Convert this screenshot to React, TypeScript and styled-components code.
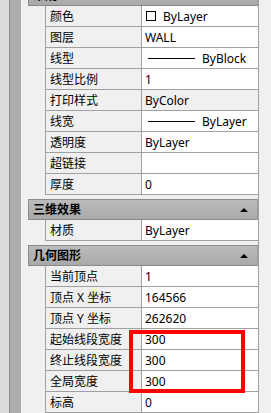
import React from 'react';
import styled, { createGlobalStyle } from 'styled-components';

const GlobalStyle = createGlobalStyle`
  html, body {
    margin: 0;
    padding: 0;
    overflow: hidden;
    background: #f0f0f0;
  }
`;

interface Row {
  label: string;
  value?: string;
  swatch?: boolean;
  lineSample?: boolean;
  readonly?: boolean;
}

interface Section {
  title: string;
  rows: Row[];
}

const sections: Section[] = [
  {
    title: '常规',
    rows: [
      { label: '颜色', value: 'ByLayer', swatch: true },
      { label: '图层', value: 'WALL' },
      { label: '线型', value: 'ByBlock', lineSample: true },
      { label: '线型比例', value: '1' },
      { label: '打印样式', value: 'ByColor', readonly: true },
      { label: '线宽', value: 'ByLayer', lineSample: true },
      { label: '透明度', value: 'ByLayer' },
      { label: '超链接', value: '' },
      { label: '厚度', value: '0' },
    ],
  },
  {
    title: '三维效果',
    rows: [{ label: '材质', value: 'ByLayer' }],
  },
  {
    title: '几何图形',
    rows: [
      { label: '当前顶点', value: '1' },
      { label: '顶点 X 坐标', value: '164566' },
      { label: '顶点 Y 坐标', value: '262620' },
      { label: '起始线段宽度', value: '300' },
      { label: '终止线段宽度', value: '300' },
      { label: '全局宽度', value: '300' },
      { label: '标高', value: '0' },
    ],
  },
];

const App: React.FC = () => {
  return (
    <Window>
      <GlobalStyle />
      <OuterStrip />
      <TitleStrip />
      <Palette>
        {sections.map((section, i) => (
          <Group key={section.title} $first={i === 0}>
            <GroupHeader>
              <span>{section.title}</span>
              <Collapse />
            </GroupHeader>
            {section.rows.map((row) => (
              <PropRow key={row.label}>
                <Label>{row.label}</Label>
                <Value $readonly={row.readonly}>
                  {row.swatch && <Swatch />}
                  {row.lineSample && <LineSample />}
                  {row.value}
                </Value>
              </PropRow>
            ))}
          </Group>
        ))}
      </Palette>
      <ScrollArea />
      {/* red annotation around the width fields */}
      <Highlight />
    </Window>
  );
};

const Window = styled.div`
  position: relative;
  display: flex;
  width: 271px;
  height: 413px;
  overflow: hidden;
  background: #f0f0f0;
  font-family: 'Noto Sans', 'Noto Sans CJK SC', sans-serif;
  font-size: 12px;
  color: #000;
`;

const OuterStrip = styled.div`
  width: 9px;
  flex: none;
  background: #dcdcdc;
  border-right: 1px solid #8c8c8c;
`;

const TitleStrip = styled.div`
  width: 11px;
  flex: none;
  background: #adadad;
`;

const Palette = styled.div`
  width: 237px;
  flex: none;
  padding-left: 7px;
  box-sizing: border-box;
  background: #f0f0f0;
  display: flex;
  flex-direction: column;
`;

const Group = styled.div<{ $first?: boolean }>`
  display: flex;
  flex-direction: column;
  margin-top: ${(p) => (p.$first ? '-15px' : '4px')};
`;

const GroupHeader = styled.div`
  height: 19px;
  display: flex;
  align-items: center;
  justify-content: space-between;
  padding: 0 9px 0 4px;
  border: 1px solid #8a8a8a;
  border-right-color: #9a9a9a;
  background: linear-gradient(#bcbcbc, #a9a9a9);
  font-weight: 700;
  line-height: 19px;
`;

const Collapse = styled.span`
  width: 0;
  height: 0;
  border-left: 4px solid transparent;
  border-right: 4px solid transparent;
  border-bottom: 4px solid #000;
`;

const PropRow = styled.div`
  display: grid;
  grid-template-columns: 96px 1fr;
  margin-left: 17px;
  height: 21px;
`;

const Cell = styled.div`
  display: flex;
  align-items: center;
  height: 20px;
  border-bottom: 1px solid #a0a0a0;
  border-left: 1px solid #a0a0a0;
  white-space: nowrap;
  overflow: hidden;
`;

const Label = styled(Cell)`
  padding-left: 4px;
  background: #f0f0f0;
`;

const Value = styled(Cell)<{ $readonly?: boolean }>`
  padding-left: 3px;
  background: ${(p) => (p.$readonly ? '#f0f0f0' : '#ffffff')};
`;

const Swatch = styled.span`
  width: 8px;
  height: 8px;
  border: 1px solid #000;
  background: #fff;
  margin: 0 7px 0 1px;
  flex: none;
`;

const LineSample = styled.span`
  width: 47px;
  height: 1px;
  background: #000;
  margin: 0 7px 0 3px;
  flex: none;
`;

const ScrollArea = styled.div`
  flex: 1;
  border-left: 1px solid #a0a0a0;
  background: #f0f0f0;
`;

const Highlight = styled.div`
  position: absolute;
  left: 129px;
  top: 330px;
  width: 116px;
  height: 63px;
  box-sizing: border-box;
  border: 4px solid #ff0000;
  pointer-events: none;
`;

export default App;
